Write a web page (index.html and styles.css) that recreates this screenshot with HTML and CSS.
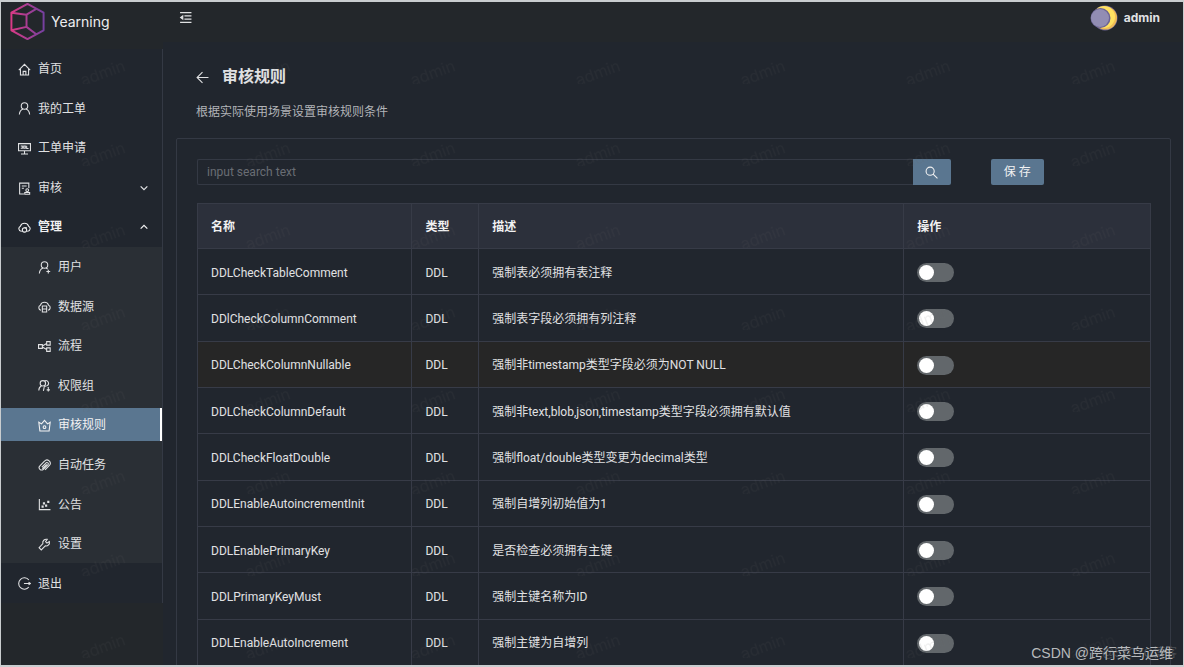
FILE: index.html
```html
<!DOCTYPE html>
<html lang="zh-CN">
<head>
<meta charset="utf-8">
<title>Yearning</title>
<link rel="stylesheet" href="styles.css">
</head>
<body>
<svg class="defs" aria-hidden="true">
  <symbol id="home" viewBox="0 0 24 24"><path d="M1.500 13 12 2.500 22.500 13M4.500 11v11h15V11M9.500 22v-6.500h5V22"/></symbol>
  <symbol id="user" viewBox="0 0 24 24"><circle cx="12" cy="7.500" r="6"/><path d="M2.500 23c.5-5 3-8.500 6.500-10M21.500 23c-.5-5-3-8.500-6.500-10"/></symbol>
  <symbol id="sql" viewBox="0 0 24 24"><path d="M1 3h22v13H1zM12 16v6M5.500 22h13M5 7.500h3v4H5M10.500 7.500h3v4h-3zM16 7v5h3.500"/></symbol>
  <symbol id="audit" viewBox="0 0 24 24"><path d="M11 22H3V2h17v9M7 7.500h9M7 11.500h4"/><circle cx="17" cy="15" r="2.500"/><path d="M12.500 22.500v-3h9v3z"/></symbol>
  <symbol id="cloud" viewBox="0 0 24 24"><path d="M7 19H6A5 5 0 0 1 4.500 9.500a8 8 0 0 1 15 0A5 5 0 0 1 18 19h-1"/><circle cx="12" cy="16.500" r="4"/><path d="M12 12.500h4.500"/></symbol>
  <symbol id="useradd" viewBox="0 0 24 24"><circle cx="12" cy="7.500" r="6"/><path d="M2.500 23c.5-5 3-8.500 6.500-10M15 13l3 2M19 16v7M15.500 19.500h7"/></symbol>
  <symbol id="source" viewBox="0 0 24 24"><path d="M5.500 19a5 5 0 0 1-1-9.500 8 8 0 0 1 15 0 5 5 0 0 1-1 9.500M8 11h8v11H8zM8 16.500h8"/></symbol>
  <symbol id="flow" viewBox="0 0 24 24"><path d="M1 8.500h7v7H1zM16 3h6.500v6.500H16zM16 14.500h6.500V21H16zM8 11l8-4.500M8 13l8 4.500"/></symbol>
  <symbol id="group" viewBox="0 0 24 24"><circle cx="9" cy="8" r="5"/><path d="M1.500 21c0-4 2-7 5-8.500M12 3.500a5 5 0 1 1 4.500 9M16 13a4 4 0 0 0-5 4l-1 5M18 15l2 2M19 17v6M16 20h6"/></symbol>
  <symbol id="crown" viewBox="0 0 24 24"><path d="M1.500 6l5 3L12 2.500 17.500 9l5-3-2 16h-17z"/><circle cx="12" cy="15" r="2.500"/></symbol>
  <symbol id="clip" viewBox="0 0 24 24"><path d="M7 15l8-8a2.500 2.500 0 0 1 3.500 3.500L10 19a4.500 4.500 0 0 1-6.500-6.500L12 4a6 6 0 0 1 9 8l-8 8M8 18l8-8"/></symbol>
  <symbol id="chart" viewBox="0 0 24 24"><path d="M2.500 2v19.500H23"/><path d="M7.500 15h2v2h-2zM10 9h2v2h-2zM14 13h2v2h-2zM18 6h2v2h-2z"/></symbol>
  <symbol id="tool" viewBox="0 0 24 24"><path d="M21 6.500l-4.500 3-2.500-2.500 3-4.500a6.500 6.500 0 0 0-8 8L2 18l4 4 7.500-7.500a6.500 6.500 0 0 0 7.500-8z"/></symbol>
  <symbol id="exit" viewBox="0 0 24 24"><path d="M20 5.500a10.500 10.500 0 1 0 0 13M11 12h12M19.500 9.500 23 12l-3.500 2.500"/></symbol>
  <symbol id="down" viewBox="0 0 24 24"><path d="M4 8l8 8 8-8"/></symbol>
  <symbol id="up" viewBox="0 0 24 24"><path d="M4 16l8-8 8 8"/></symbol>
  <symbol id="back" viewBox="0 0 24 24"><path d="M23 12H2M12 2 2 12l10 10"/></symbol>
  <symbol id="search" viewBox="0 0 24 24"><circle cx="9.500" cy="9.500" r="7.500"/><path d="M15 15l8 8"/></symbol>
  <symbol id="fold" viewBox="0 0 24 24"><path d="M2 3h21M10 9h13M10 15h13M2 21h21"/><path d="M7 9v6l-4-3z" fill="currentColor"/></symbol>
</svg>
<div class="app">
  <aside class="sidebar">
    <div class="brand">
      <svg class="logo" viewBox="0 0 36 40" aria-hidden="true">
        <defs><linearGradient id="tint" x1="0" y1="0" x2="1" y2="0"><stop offset="0" stop-color="#d93a86"/><stop offset="1" stop-color="#76409f"/></linearGradient></defs>
        <path d="M18 2 34.500 11v18L18 38 1.500 29V11zM1.500 11l15.500 2 10-6M17 13v12.500L1.500 29M17 25.500l10 7.500"/>
      </svg>
      <span>Yearning</span>
    </div>
    <nav>
      <ul class="menu">
        <li><a href="#"><svg class="icon"><use href="#home"/></svg>首页</a></li>
        <li><a href="#"><svg class="icon"><use href="#user"/></svg>我的工单</a></li>
        <li><a href="#"><svg class="icon"><use href="#sql"/></svg>工单申请</a></li>
        <li><a href="#"><svg class="icon"><use href="#audit"/></svg>审核<svg class="icon arrow"><use href="#down"/></svg></a></li>
        <li class="open"><a href="#"><svg class="icon"><use href="#cloud"/></svg>管理<svg class="icon arrow"><use href="#up"/></svg></a>
          <ul class="submenu">
            <li><a href="#"><svg class="icon"><use href="#useradd"/></svg>用户</a></li>
            <li><a href="#"><svg class="icon"><use href="#source"/></svg>数据源</a></li>
            <li><a href="#"><svg class="icon"><use href="#flow"/></svg>流程</a></li>
            <li><a href="#"><svg class="icon"><use href="#group"/></svg>权限组</a></li>
            <li><a class="active" href="#"><svg class="icon"><use href="#crown"/></svg>审核规则</a></li>
            <li><a href="#"><svg class="icon"><use href="#clip"/></svg>自动任务</a></li>
            <li><a href="#"><svg class="icon"><use href="#chart"/></svg>公告</a></li>
            <li><a href="#"><svg class="icon"><use href="#tool"/></svg>设置</a></li>
          </ul>
        </li>
        <li><a href="#"><svg class="icon"><use href="#exit"/></svg>退出</a></li>
      </ul>
    </nav>
  </aside>
  <div class="main">
    <header class="topbar">
      <button class="plain" type="button" aria-label="收起菜单"><svg class="icon"><use href="#fold"/></svg></button>
      <div class="account">
        <svg class="moon" viewBox="0 0 28 28" aria-hidden="true"><circle cx="15" cy="14" r="12.500" fill="#6b6394"/><circle cx="15.500" cy="14" r="11.500" fill="#f0bd55"/><circle cx="14" cy="13" r="11" fill="#ffe261"/><circle cx="10.500" cy="14" r="10" fill="#6b6394"/><circle cx="10" cy="14" r="9" fill="#928db3"/></svg>
        <strong>admin</strong>
      </div>
    </header>
    <div class="page-head">
      <div class="title"><button class="plain" type="button" aria-label="返回"><svg class="icon"><use href="#back"/></svg></button><h1>审核规则</h1></div>
      <p>根据实际使用场景设置审核规则条件</p>
    </div>
    <section class="card">
      <form class="tools">
        <div class="search">
          <input type="text" aria-label="搜索" placeholder="input search text">
          <button type="button" aria-label="搜索"><svg class="icon"><use href="#search"/></svg></button>
        </div>
        <button class="save" type="button">保 存</button>
      </form>
      <table>
        <colgroup><col class="c-name"><col class="c-type"><col class="c-desc"><col></colgroup>
        <thead><tr><th>名称</th><th>类型</th><th>描述</th><th>操作</th></tr></thead>
        <tbody>
          <tr><td>DDLCheckTableComment</td><td>DDL</td><td>强制表必须拥有表注释</td><td><input class="switch" type="checkbox" role="switch" aria-label="DDLCheckTableComment"></td></tr>
          <tr><td>DDlCheckColumnComment</td><td>DDL</td><td>强制表字段必须拥有列注释</td><td><input class="switch" type="checkbox" role="switch" aria-label="DDlCheckColumnComment"></td></tr>
          <tr class="hovered"><td>DDLCheckColumnNullable</td><td>DDL</td><td>强制非timestamp类型字段必须为NOT NULL</td><td><input class="switch" type="checkbox" role="switch" aria-label="DDLCheckColumnNullable"></td></tr>
          <tr><td>DDLCheckColumnDefault</td><td>DDL</td><td>强制非text,blob,json,timestamp类型字段必须拥有默认值</td><td><input class="switch" type="checkbox" role="switch" aria-label="DDLCheckColumnDefault"></td></tr>
          <tr><td>DDLCheckFloatDouble</td><td>DDL</td><td>强制float/double类型变更为decimal类型</td><td><input class="switch" type="checkbox" role="switch" aria-label="DDLCheckFloatDouble"></td></tr>
          <tr><td>DDLEnableAutoincrementInit</td><td>DDL</td><td>强制自增列初始值为1</td><td><input class="switch" type="checkbox" role="switch" aria-label="DDLEnableAutoincrementInit"></td></tr>
          <tr><td>DDLEnablePrimaryKey</td><td>DDL</td><td>是否检查必须拥有主键</td><td><input class="switch" type="checkbox" role="switch" aria-label="DDLEnablePrimaryKey"></td></tr>
          <tr><td>DDLPrimaryKeyMust</td><td>DDL</td><td>强制主键名称为ID</td><td><input class="switch" type="checkbox" role="switch" aria-label="DDLPrimaryKeyMust"></td></tr>
          <tr><td>DDLEnableAutoIncrement</td><td>DDL</td><td>强制主键为自增列</td><td><input class="switch" type="checkbox" role="switch" aria-label="DDLEnableAutoIncrement"></td></tr>
        </tbody>
      </table>
    </section>
  </div>
  <svg class="watermark" aria-hidden="true">
    <defs><pattern id="wm" width="165" height="82" patternUnits="userSpaceOnUse"><text x="82" y="84" transform="rotate(-20 82 84)">admin</text></pattern></defs>
    <rect width="100%" height="100%" fill="url(#wm)"/>
  </svg>
  <div class="credit ghost">@51CTO博客</div>
  <div class="credit">CSDN @跨行菜鸟运维</div>
</div>
</body>
</html>
```
FILE: styles.css
```css
* { box-sizing: border-box; }

body {
  margin: 0;
  background: #c9cdcf;
  color: #e0e1e3;
  font: 12px/20px Roboto, "Noto Sans CJK SC", sans-serif;
}

a { color: inherit; text-decoration: none; }
ul { list-style: none; margin: 0; padding: 0; }
button, input { font: inherit; color: inherit; }

.defs { position: absolute; width: 0; height: 0; }

.icon {
  width: 13px;
  height: 13px;
  flex: none;
  fill: none;
  stroke: currentColor;
  stroke-width: 2;
}

.app {
  position: relative;
  display: flex;
  height: 100vh;
  overflow: hidden;
  border: solid #c9cdcf;
  border-width: 2px 1px;
  background: #21262e;
}

.sidebar { width: 162px; flex: none; background: #23272b; }

.brand {
  display: flex;
  align-items: center;
  gap: 5px;
  height: 47px;
  padding: 0 8px 8px;
  color: #eeeeef;
  font-family: Inter, sans-serif;
  font-size: 14px;
}
.logo { width: 37px; height: 39px; fill: none; stroke: url(#tint); stroke-width: 2; stroke-linejoin: round; }

.menu {
  display: flex;
  flex-direction: column;
  min-height: 554px;
  background: #21262e;
  border-right: 1px solid #343944;
}
.menu li { flex: 1 1 0; display: flex; flex-direction: column; justify-content: center; }
.menu a {
  display: flex;
  align-items: center;
  gap: 7px;
  height: 33px;
  padding: 1px 13px 0 17px;
}
.menu .open { flex-grow: 9; justify-content: flex-start; color: #f1f1f2; }
.menu .open > a { flex: 1 1 0; padding-top: 0; font-weight: 600; }
.menu .arrow { width: 10px; height: 10px; margin-left: auto; stroke-width: 3; }
.submenu { flex: 8 1 0; display: flex; flex-direction: column; background: #2a2f35; color: #e0e1e3; }
.menu .submenu a { padding-left: 37px; }
.submenu .active { background: #5a7690; border-right: 2px solid #fff; color: #f1f1f2; }

.main { flex: 1; min-width: 0; }

.topbar {
  display: flex;
  justify-content: space-between;
  height: 40px;
  padding: 1px 23px 0 16px;
  background: #23272b;
}
.plain { display: flex; padding: 0; border: 0; background: none; }
.topbar .plain { height: 28px; align-items: center; }
.account { display: flex; align-items: center; gap: 6px; height: 30px; font-family: Inter, sans-serif; }
.moon { width: 28px; height: 28px; }

.page-head { padding: 22px 33px 16px; }
.title { display: flex; align-items: center; gap: 13px; height: 26px; }
h1 { margin: 0; font-size: 16px; line-height: 26px; font-weight: 600; }
.page-head p { margin: 12px 0 0; color: #b2b4b8; }

.card {
  margin: 0 12px 0 13px;
  padding: 20px 19px 20px 20px;
  border: 1px solid #343944;
  border-radius: 2px;
}

.tools { display: flex; gap: 40px; margin-bottom: 18px; }
.search { display: flex; width: 79%; }
.search input {
  flex: 1;
  min-width: 0;
  height: 26px;
  padding: 0 9px;
  border: 1px solid #343944;
  border-right: 0;
  border-radius: 2px 0 0 2px;
  background: transparent;
}
.search input::placeholder { color: #696d74; }
.search button, .save {
  display: flex;
  align-items: center;
  justify-content: center;
  height: 26px;
  border: 0;
  background: #5a7690;
  color: #f1f1f2;
}
.search button { width: 38px; border-radius: 0 2px 2px 0; }
.save { padding: 0 13px; border-radius: 2px; }

table {
  width: 100%;
  height: 463px;
  table-layout: fixed;
  border-collapse: collapse;
}
.c-name { width: 22.5%; }
.c-type { width: 7%; }
.c-desc { width: 44.6%; }
th, td { padding: 2px 13px 0; border: 1px solid #373b47; text-align: left; }
thead tr { height: 45px; }
th { background: #2c303b; color: #f1f1f2; font-weight: 600; }
.hovered { background: #262626; }

.switch {
  appearance: none;
  display: block;
  width: 37px;
  height: 19px;
  margin: 0;
  padding: 2px;
  border-radius: 10px;
  background: #62676b;
}
.switch::before { content: ""; display: block; width: 15px; height: 15px; border-radius: 50%; background: #fff; }
.switch:checked { background: #5a7690; }
.switch:checked::before { margin-left: auto; }

.watermark { position: absolute; inset: 0; width: 100%; height: 100%; pointer-events: none; }
.watermark text { font-family: Inter, sans-serif; font-size: 16px; fill: #666666; fill-opacity: 0.1; }

.credit {
  position: absolute;
  right: 10px;
  bottom: 1px;
  color: #b8babd;
  font-family: "Liberation Sans", "Noto Sans CJK SC", sans-serif;
  font-size: 14px;
  line-height: 22px;
}
.credit.ghost { right: 6px; color: #4b5056; font-size: 12px; }
```
